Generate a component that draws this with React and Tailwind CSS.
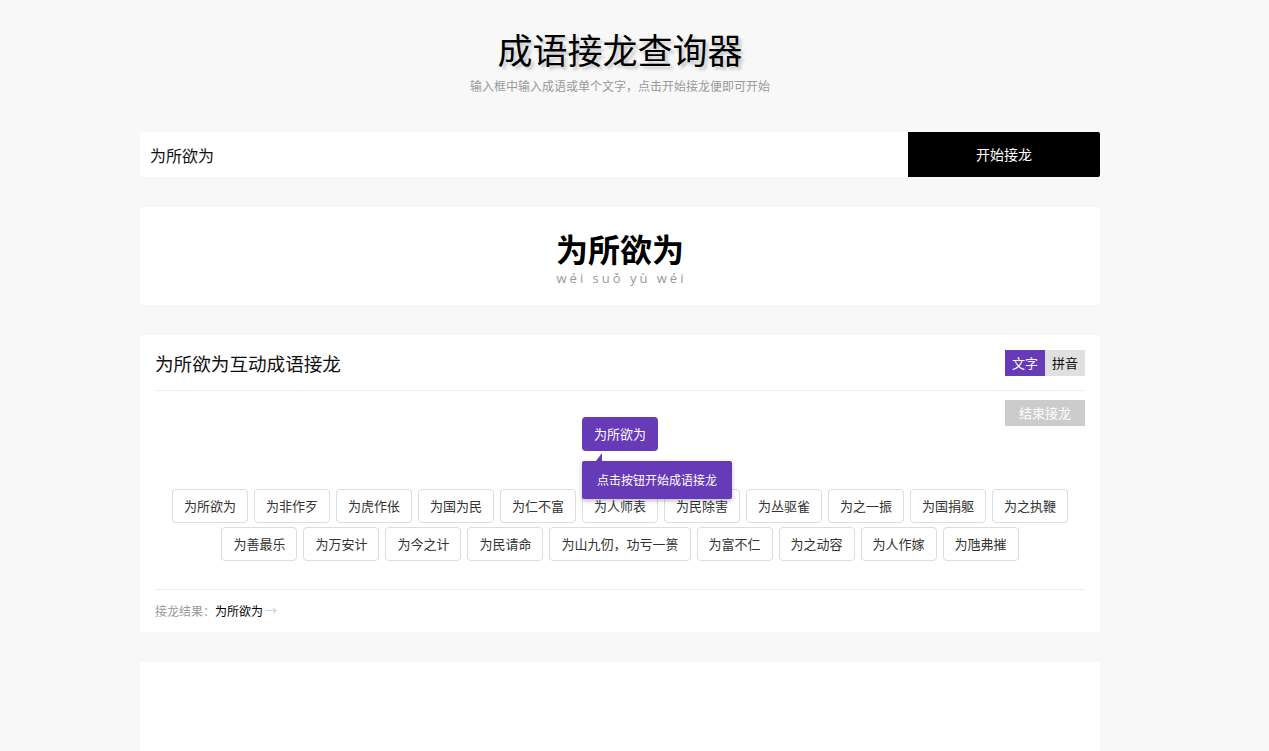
const chips1 = ["为所欲为", "为非作歹", "为虎作伥", "为国为民", "为仁不富", "为人师表", "为民除害", "为丛驱雀", "为之一振", "为国捐躯", "为之执鞭"];
const chips2 = ["为善最乐", "为万安计", "为今之计", "为民请命", "为山九仞，功亏一篑", "为富不仁", "为之动容", "为人作嫁", "为虺弗摧"];

function Chip({ text }) {
  return (
    <span className="h-[34px] flex items-center px-[11px] border border-[#dddddd] rounded-[4px] text-[13px] text-[#333] bg-white">
      {text}
    </span>
  );
}

export default function App() {
  return (
    <div
      className="min-h-[751px] bg-[#f8f8f8] pb-10"
      style={{ fontFamily: '"Noto Sans CJK SC", "Noto Sans", sans-serif' }}
    >
      <div className="w-[960px] ml-[140px]">
        {/* 标题 */}
        <div className="pt-[27px] text-center">
          <h1 className="text-[35px] leading-[44px] text-black [text-shadow:3px_3px_3px_#c8c8c8]">
            成语接龙查询器
          </h1>
          <p className="text-[12px] leading-[16px] mt-[7px] text-[#999]">
            输入框中输入成语或单个文字，点击开始接龙便即可开始
          </p>
        </div>

        {/* 搜索 */}
        <div className="flex mt-[38px] h-[45px]">
          <div className="flex-1 bg-white flex items-center pl-[10px] text-[16px] text-[#111]">为所欲为</div>
          <button className="w-[192px] bg-black text-white text-[14px] rounded-r-[2px]">开始接龙</button>
        </div>

        {/* 成语卡片 */}
        <div className="mt-[30px] bg-white h-[98px] flex flex-col items-center pt-[23px]">
          <div className="text-[32px] leading-[36px] font-bold text-black">为所欲为</div>
          <div className="text-[13px] leading-[15px] tracking-[3px] text-[#999] mt-[5px] pl-[3px]" style={{ fontFamily: '"Open Sans", sans-serif' }}>
            wéi suǒ yù wéi
          </div>
        </div>

        {/* 接龙 */}
        <div className="mt-[30px] bg-white px-[15px] rounded-b-[3px]">
          <div className="h-[56px] flex items-center justify-between border-b border-[#eeeeee]">
            <h2 className="text-[18.6px] text-[#111]">为所欲为互动成语接龙</h2>
            <div className="flex text-[13px]">
              <span className="w-[40px] h-[26px] flex items-center justify-center bg-[#673ab7] text-white">文字</span>
              <span className="w-[40px] h-[26px] flex items-center justify-center bg-[#e0e0e0] text-[#111]">拼音</span>
            </div>
          </div>

          <div className="relative pt-[26px] pb-[28px] border-b border-[#eeeeee]">
            <button className="absolute right-0 top-[9px] w-[80px] h-[26px] bg-[#cccccc] text-white text-[13px]">结束接龙</button>

            <div className="flex justify-center">
              <div className="relative">
                <div className="w-[76px] h-[34px] flex items-center justify-center bg-[#673ab7] text-white text-[13px] rounded-[4px]">
                  为所欲为
                </div>
                <div className="absolute left-0 top-[36px] z-10">
                  <div className="ml-[14px] w-0 h-0 border-l-[6px] border-l-transparent border-b-[8px] border-b-[#673ab7]"></div>
                  <div className="w-[150px] h-[38px] flex items-center justify-center bg-[#673ab7] text-white text-[12px] rounded-[2px] shadow-[0_2px_4px_rgba(0,0,0,0.25)]">
                    点击按钮开始成语接龙
                  </div>
                </div>
              </div>
            </div>

            <div className="mt-[38px] flex flex-col items-center gap-[4px]">
              <div className="flex gap-[6px]">
                {chips1.map((c) => (
                  <Chip key={c} text={c} />
                ))}
              </div>
              <div className="flex gap-[6px]">
                {chips2.map((c) => (
                  <Chip key={c} text={c} />
                ))}
              </div>
            </div>
          </div>

          <div className="h-[42px] flex items-center text-[12px]">
            <span className="text-[#999]">接龙结果：</span>
            <span className="text-black">为所欲为</span>
            <span className="text-[#cccccc] ml-[2px]">→</span>
          </div>
        </div>

        <div className="mt-[30px] bg-white h-[200px]"></div>
      </div>
    </div>
  );
}
